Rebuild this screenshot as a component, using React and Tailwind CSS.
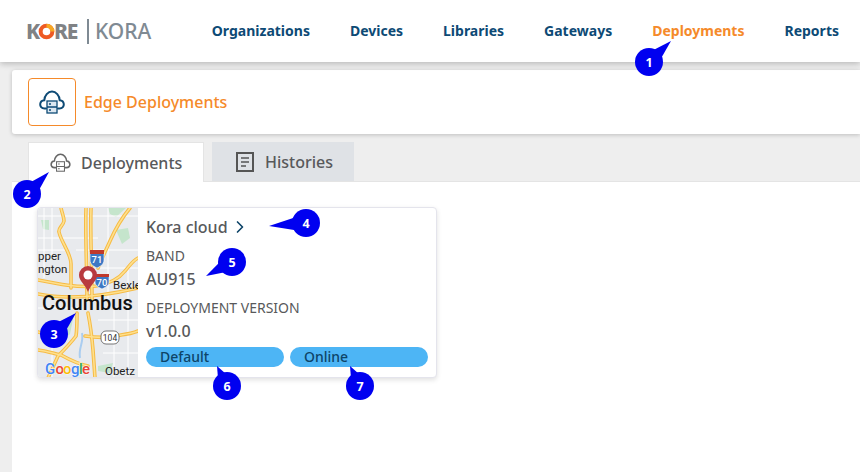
import React from 'react';
import { ChevronRight } from 'lucide-react';

const font = "font-['Noto_Sans',sans-serif]";

const navItems = ['Organizations', 'Devices', 'Libraries', 'Gateways', 'Deployments', 'Reports'];

// number, circle centre, tail tip
const callouts = [
  { n: 1, cx: 649, cy: 62, tx: 671, ty: 41 },
  { n: 2, cx: 27, cy: 194, tx: 49, ty: 172 },
  { n: 3, cx: 54, cy: 334, tx: 76, ty: 313 },
  { n: 4, cx: 306, cy: 223, tx: 269, ty: 226 },
  { n: 5, cx: 232, cy: 262, tx: 206, ty: 276 },
  { n: 6, cx: 227, cy: 386, tx: 217, ty: 366 },
  { n: 7, cx: 360, cy: 386, tx: 350, ty: 366 },
];

const highways = [
  'M23 0C24 5 26 9 26 13 25 18 20 20 21 24 23 34 33 45 33 56V80',
  'M48 0C47 25 49 60 49 92',
  'M53 0C52 25 54 60 54 92',
  'M92 0C82 12 76 24 72 33 68 42 65 48 60 60',
  'M100 50C94 53 90 60 87 63 80 72 70 76 58 78 40 80 20 76 0 72',
  'M0 86C20 90 50 92 100 80',
  'M39 105C39 115 39 122 38 128 32 136 26 142 20 148L10 170',
  'M0 142C8 143 14 145 23 147 32 152 40 156 50 158',
  'M47 128C60 130 72 130 83 127 90 126 95 125 100 123',
  'M50 105C52 115 54 130 55 142L57 170',
  'M0 124C8 126 16 128 24 134',
];

const CloudIcon = ({ className, stroke, fill }) => (
  <svg viewBox="0 0 26 24" className={className} fill="none" stroke={stroke} strokeWidth="2">
    <path d="M7 18.500H5.500C2.500 18.500 1 16.500 1.200 14 1.500 11.500 3.500 10.300 5.300 10.200 5.500 5.500 9 1.500 13 1.500S20.500 5.500 20.700 10.200C22.500 10.300 24.500 11.500 24.800 14 25 16.500 23.500 18.500 20.500 18.500H19" strokeLinecap="round" />
    <rect x="8" y="11" width="10" height="12" fill={fill} strokeWidth="1.300" />
    <path d="M8 17H18M10 14H12M10 20H12" strokeWidth="1.300" />
  </svg>
);

const DocIcon = () => (
  <svg viewBox="0 0 18 20" className="w-[18px] h-[20px]" fill="none" stroke="#555">
    <rect x="1" y="1" width="16" height="18" strokeWidth="2" />
    <path d="M5 6H13M5 10H13M5 14H10" strokeWidth="1.600" />
  </svg>
);

const Logo = () => (
  <div className={`flex items-center ${font}`}>
    <div className="flex items-center text-[21px] font-extrabold text-[#808285] tracking-[-1.200px] w-[61px] leading-none">
      <span>K</span>
      <svg viewBox="0 0 16 16" className="w-[17px] h-[17px] mx-[-1px]">
        <circle cx="8" cy="8" r="5.500" fill="none" stroke="#ee5a24" strokeWidth="3.800" />
        <path d="M8 2.500A5.500 5.500 0 0 1 13.500 8" fill="none" stroke="#f7a823" strokeWidth="3.800" />
      </svg>
      <span>RE</span>
    </div>
    <div className="w-[2px] h-[25px] bg-[#7f8a93]" />
    <span className="ml-[6px] text-[21px] font-medium text-[#7f8a93] leading-none">KORA</span>
  </div>
);

const MapThumb = () => (
  <svg viewBox="0 0 100 170" className="w-[100px] h-[170px] block shrink-0 rounded-l-[3px]">
    <rect width="100" height="170" fill="#e8eaed" />
    {/* parks and water */}
    <path d="M3 12H11V22L5 21Z" fill="#c5e5cc" />
    <path d="M70 0H88L78 9 72 6Z" fill="#c5e5cc" />
    <path d="M78 22L90 20 92 30 84 36Z" fill="#c5e5cc" />
    <path d="M14 118L36 106 32 126 22 135Z" fill="#c5e5cc" />
    <path d="M60 158L75 155 72 165 60 163Z" fill="#c5e5cc" />
    <path d="M42 150C40 140 46 135 44 125" fill="none" stroke="#aacdf0" strokeWidth="2" />
    {/* minor roads */}
    <g fill="none" stroke="#ffffff" strokeWidth="1">
      <path d="M0 8H100M0 30H60M0 42H30M38 42H100M60 60H100M70 0V100M90 60V170M6 0V70M14 0V50" />
      <path d="M0 100H40M60 112H100M65 145H100M14 120V170M76 100V170" />
    </g>
    {/* highways */}
    <g fill="none" strokeLinecap="round">
      <g stroke="#f6bb45" strokeWidth="3.600">
        {highways.map((d) => <path key={d} d={d} />)}
      </g>
      <g stroke="#fee08e" strokeWidth="1.600">
        {highways.map((d) => <path key={d} d={d} />)}
      </g>
    </g>
    {/* interstate shields */}
    <path d="M52 44H66V52C66 57 61 59 59 60 57 59 52 57 52 52Z" fill="#3d78c4" stroke="#fff" strokeWidth="0.600" />
    <rect x="52" y="42" width="14" height="4" fill="#c0392b" />
    <text x="59" y="55" textAnchor="middle" fontSize="9.500" fontWeight="500" fill="#fff" fontFamily="Roboto, sans-serif">71</text>
    <path d="M57 68H71V74C71 78 66 80 64 81 62 80 57 78 57 74Z" fill="#3d78c4" stroke="#fff" strokeWidth="0.600" />
    <rect x="57" y="66" width="14" height="3" fill="#c0392b" />
    <text x="64" y="78" textAnchor="middle" fontSize="9.500" fontWeight="500" fill="#fff" fontFamily="Roboto, sans-serif">70</text>
    {/* state route */}
    <rect x="63" y="123" width="18" height="13" rx="5" fill="#fff" stroke="#555" strokeWidth="0.800" />
    <text x="72" y="132.700" textAnchor="middle" fontSize="8.500" fill="#333" fontFamily="Roboto, sans-serif">104</text>
    {/* place labels */}
    <g fontFamily="Roboto, sans-serif" fill="#222">
      <text x="0" y="52" fontSize="11.500">pper</text>
      <text x="0" y="65" fontSize="11.500">ngton</text>
      <text x="75" y="81" fontSize="11.500">Bexle</text>
      <text x="67" y="167" fontSize="11.500">Obetz</text>
      <text x="4" y="102" fontSize="20" fontWeight="500" fill="#111">Columbus</text>
    </g>
    {/* google mark */}
    <g fontFamily="Roboto, sans-serif" fontSize="15" fontWeight="500" stroke="#fff" strokeWidth="0.800" paintOrder="stroke">
      <text x="7" y="166" fill="#4285f4">G</text>
      <text x="17.500" y="166" fill="#ea4335">o</text>
      <text x="25" y="166" fill="#fbbc05">o</text>
      <text x="33" y="166" fill="#4285f4">g</text>
      <text x="41" y="166" fill="#34a853">l</text>
      <text x="44" y="166" fill="#ea4335">e</text>
    </g>
    {/* pin */}
    <path d="M50 84C47 76 41 73 41 67A9 9 0 0 1 59 67C59 73 53 76 50 84Z" fill="#b83a3f" />
    <circle cx="50" cy="67" r="4.500" fill="#fff" />
  </svg>
);

const Pill = ({ label }) => (
  <div className="w-[138px] h-[20px] rounded-full bg-[#4db5f5] pl-[14px] flex items-center text-[14px] font-medium leading-none text-[#0d4468]">
    {label}
  </div>
);

const DeploymentCard = () => (
  <div className="flex w-[400px] h-[171px] bg-white rounded-[4px] border border-[#e4e4ec] shadow-[0_2px_5px_rgba(0,0,0,0.12)] overflow-hidden">
    <MapThumb />
    <div className="flex-1 pl-[8px] pt-[9px] text-[#58595b]">
      <div className="flex items-center h-[20px] text-[16px] font-medium">
        Kora cloud
        <ChevronRight className="w-[20px] h-[20px] ml-[2px] text-[#0d4468]" strokeWidth={2} />
      </div>
      <div className="mt-[9px] h-[20px] flex items-center text-[14px] leading-none">BAND</div>
      <div className="mt-[3px] h-[20px] flex items-center text-[16px] font-medium leading-none">AU915</div>
      <div className="mt-[9px] h-[20px] flex items-center text-[14px] leading-none">DEPLOYMENT VERSION</div>
      <div className="mt-[3px] h-[20px] flex items-center text-[16px] font-medium leading-none">v1.0.0</div>
      <div className="mt-[6px] flex gap-[6px]">
        <Pill label="Default" />
        <Pill label="Online" />
      </div>
    </div>
  </div>
);

const Callouts = () => (
  <svg className="absolute inset-0 z-20 w-[860px] h-[472px] pointer-events-none" viewBox="0 0 860 472">
    {callouts.map((c) => {
      const dx = c.tx - c.cx;
      const dy = c.ty - c.cy;
      const len = Math.hypot(dx, dy);
      const px = (-dy / len) * 9;
      const py = (dx / len) * 9;
      return (
        <g key={c.n}>
          <path d={`M${c.cx + px} ${c.cy + py}L${c.tx} ${c.ty}L${c.cx - px} ${c.cy - py}Z`} fill="#0000f0" />
          <circle cx={c.cx} cy={c.cy} r="14" fill="#0000f0" />
          <text x={c.cx} y={c.cy + 4.500} textAnchor="middle" fontSize="12.500" fontWeight="700" fill="#fff" fontFamily="Noto Sans, sans-serif">{c.n}</text>
        </g>
      );
    })}
  </svg>
);

export default function App() {
  return (
    <div className={`relative w-[860px] h-[472px] overflow-hidden bg-[#eeeeee] flex flex-col ${font}`}>
      <header className="h-[62px] shrink-0 bg-white flex items-center justify-between pl-[26px] pr-[21px] shadow-[0_2px_6px_rgba(0,0,0,0.22)] z-10">
        <Logo />
        <nav className="flex gap-[40px] text-[14px] font-bold text-[#0d4a75] mb-[1px]">
          {navItems.map((item) => (
            <span key={item} className={item === 'Deployments' ? 'text-[#f58a2a]' : ''}>{item}</span>
          ))}
        </nav>
      </header>

      <div className="flex-1 flex flex-col pl-[12px] pt-[8px]">
        <div className="h-[64px] shrink-0 bg-white rounded-l-[3px] shadow-[0_1px_4px_rgba(0,0,0,0.2)] flex items-center pl-[16px]">
          <div className="w-[48px] h-[48px] rounded-[4px] border border-[#f58a2a] flex items-center justify-center">
            <CloudIcon className="w-[26px] h-[24px]" stroke="#0d4a75" fill="#dce7f0" />
          </div>
          <span className="ml-[8px] text-[16px] font-medium text-[#f58a2a]">Edge Deployments</span>
        </div>

        <div className="h-[39px] mt-[8px] shrink-0 flex items-end pl-[16px] gap-[8px] relative">
          <div className="w-[176px] h-[40px] bg-white border border-b-0 border-[#e4e4e4] flex items-center pl-[21px] text-[16px] font-medium text-[#58595b] relative top-px z-10">
            <CloudIcon className="w-[21px] h-[19px]" stroke="#666" fill="none" />
            <span className="ml-[10px]">Deployments</span>
          </div>
          <div className="w-[142px] h-[39px] bg-[#dfe2e6] flex items-center pl-[24px] pt-px text-[16px] font-medium text-[#58595b]">
            <DocIcon />
            <span className="ml-[11px]">Histories</span>
          </div>
        </div>

        <main className="flex-1 bg-white border-t border-[#e4e4e4] pl-[25px] pt-[25px]">
          <DeploymentCard />
        </main>
      </div>

      <Callouts />
    </div>
  );
}
